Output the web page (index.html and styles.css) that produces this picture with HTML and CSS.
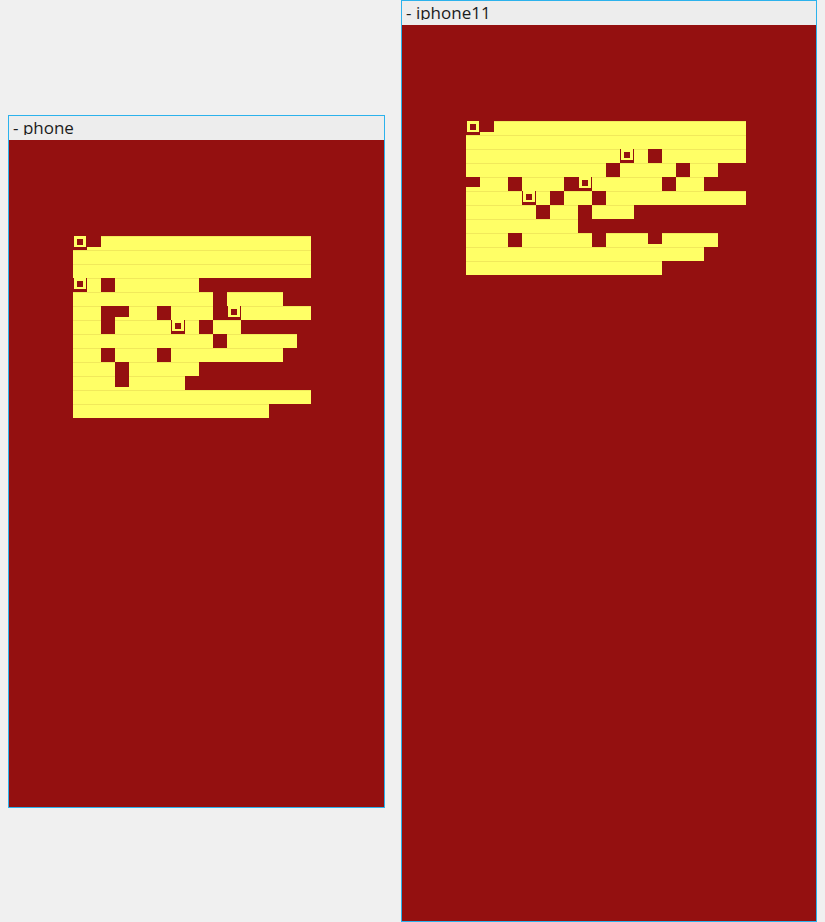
FILE: index.html
```html
<!DOCTYPE html>
<html>
<head>
<meta charset="utf-8">
<title>Devices</title>
<link rel="stylesheet" href="styles.css">
</head>
<body>
<div class="stage">
  <div class="device">
    <div class="bar"><div class="label">- phone</div></div>
    <div class="screen screen-phone">
      <div class="board board-17">
<i class="m"><b></b></i><i class="p"></i><i></i><i></i><i></i><i></i><i></i><i></i><i></i><i></i><i></i><i></i><i></i><i></i><i></i><i></i><i></i>
<i></i><i></i><i></i><i></i><i></i><i></i><i></i><i></i><i></i><i></i><i></i><i></i><i></i><i></i><i></i><i></i><i></i>
<i></i><i></i><i></i><i></i><i></i><i></i><i></i><i></i><i></i><i></i><i></i><i></i><i></i><i></i><i></i><i></i><i></i>
<i class="m"><b></b></i><i></i><i class="r"></i><i></i><i></i><i></i><i></i><i></i><i></i><i class="r"></i><i class="r"></i><i class="r"></i><i class="r"></i><i class="r"></i><i class="r"></i><i class="r"></i><i class="r"></i>
<i></i><i></i><i></i><i></i><i></i><i></i><i></i><i></i><i></i><i></i><i class="r"></i><i></i><i></i><i></i><i></i><i class="r"></i><i class="r"></i>
<i></i><i></i><i class="r"></i><i class="p"></i><i></i><i></i><i class="r"></i><i></i><i></i><i></i><i class="r"></i><i class="m"><b></b></i><i></i><i></i><i></i><i></i><i></i>
<i></i><i></i><i class="r"></i><i></i><i></i><i></i><i></i><i class="m"><b></b></i><i></i><i class="r"></i><i></i><i></i><i class="r"></i><i class="r"></i><i class="r"></i><i class="r"></i><i class="r"></i>
<i></i><i></i><i></i><i></i><i></i><i></i><i></i><i></i><i></i><i></i><i class="r"></i><i></i><i></i><i></i><i></i><i></i><i class="r"></i>
<i></i><i></i><i class="r"></i><i></i><i></i><i></i><i class="r"></i><i></i><i></i><i></i><i></i><i></i><i></i><i></i><i></i><i class="r"></i><i class="r"></i>
<i></i><i></i><i></i><i class="r"></i><i></i><i></i><i></i><i></i><i></i><i class="r"></i><i class="r"></i><i class="r"></i><i class="r"></i><i class="r"></i><i class="r"></i><i class="r"></i><i class="r"></i>
<i></i><i></i><i></i><i class="p"></i><i></i><i></i><i></i><i></i><i class="r"></i><i class="r"></i><i class="r"></i><i class="r"></i><i class="r"></i><i class="r"></i><i class="r"></i><i class="r"></i><i class="r"></i>
<i></i><i></i><i></i><i></i><i></i><i></i><i></i><i></i><i></i><i></i><i></i><i></i><i></i><i></i><i></i><i></i><i></i>
<i></i><i></i><i></i><i></i><i></i><i></i><i></i><i></i><i></i><i></i><i></i><i></i><i></i><i></i><i class="r"></i><i class="r"></i><i class="r"></i>
      </div>
    </div>
  </div>
  <div class="device">
    <div class="bar"><div class="label">- iphone11</div></div>
    <div class="screen screen-iphone11">
      <div class="board board-20">
<i class="m"><b></b></i><i class="p"></i><i></i><i></i><i></i><i></i><i></i><i></i><i></i><i></i><i></i><i></i><i></i><i></i><i></i><i></i><i></i><i></i><i></i><i></i>
<i></i><i></i><i></i><i></i><i></i><i></i><i></i><i></i><i></i><i></i><i></i><i></i><i></i><i></i><i></i><i></i><i></i><i></i><i></i><i></i>
<i></i><i></i><i></i><i></i><i></i><i></i><i></i><i></i><i></i><i></i><i></i><i class="m"><b></b></i><i></i><i class="r"></i><i></i><i></i><i></i><i></i><i></i><i></i>
<i></i><i></i><i></i><i></i><i></i><i></i><i></i><i></i><i></i><i></i><i class="r"></i><i></i><i></i><i></i><i></i><i class="r"></i><i></i><i></i><i class="r"></i><i class="r"></i>
<i class="p q"></i><i></i><i></i><i class="r"></i><i></i><i></i><i></i><i class="r"></i><i class="m"><b></b></i><i></i><i></i><i></i><i></i><i></i><i class="r"></i><i></i><i></i><i class="r"></i><i class="r"></i><i class="r"></i>
<i></i><i></i><i></i><i></i><i class="m"><b></b></i><i></i><i class="r"></i><i></i><i></i><i class="r"></i><i></i><i></i><i></i><i></i><i></i><i></i><i></i><i></i><i></i><i></i>
<i></i><i></i><i></i><i></i><i></i><i class="r"></i><i></i><i></i><i class="r"></i><i></i><i></i><i></i><i class="r"></i><i class="r"></i><i class="r"></i><i class="r"></i><i class="r"></i><i class="r"></i><i class="r"></i><i class="r"></i>
<i></i><i></i><i></i><i></i><i></i><i></i><i></i><i></i><i class="r"></i><i class="r"></i><i class="r"></i><i class="r"></i><i class="r"></i><i class="r"></i><i class="r"></i><i class="r"></i><i class="r"></i><i class="r"></i><i class="r"></i><i class="r"></i>
<i></i><i></i><i></i><i class="r"></i><i></i><i></i><i></i><i></i><i></i><i class="r"></i><i></i><i></i><i></i><i class="p"></i><i></i><i></i><i></i><i></i><i class="r"></i><i class="r"></i>
<i></i><i></i><i></i><i></i><i></i><i></i><i></i><i></i><i></i><i></i><i></i><i></i><i></i><i></i><i></i><i></i><i></i><i class="r"></i><i class="r"></i><i class="r"></i>
<i></i><i></i><i></i><i></i><i></i><i></i><i></i><i></i><i></i><i></i><i></i><i></i><i></i><i></i><i class="r"></i><i class="r"></i><i class="r"></i><i class="r"></i><i class="r"></i><i class="r"></i>
      </div>
    </div>
  </div>
</div>
</body>
</html>
```

FILE: styles.css
```css
* {
  box-sizing: border-box;
}

body {
  margin: 0;
  background: #f0f0f0;
  font-family: "Open Sans", "Noto Sans", sans-serif;
}

.stage {
  display: flex;
  align-items: center;
  gap: 16px;
  padding-left: 8px;
  height: 922px;
}

.device {
  border: 1px solid #2cb2ec;
  background: #ededed;
}

.bar {
  height: 24px;
  padding-left: 4px;
}

.label {
  height: 19px;
  overflow: hidden;
  font-size: 17px;
  line-height: 23px;
  color: #1c1c1c;
  white-space: nowrap;
}

.screen {
  background: #941010;
  padding: 96px 0 0 64px;
}

.screen-phone {
  width: 375px;
  height: 667px;
}

.screen-iphone11 {
  width: 414px;
  height: 896px;
}

.board {
  display: grid;
  grid-auto-rows: 14px;
}

.board-17 {
  grid-template-columns: repeat(17, 14px);
}

.board-20 {
  grid-template-columns: repeat(20, 14px);
}

.board i {
  display: block;
  background: #ffff66;
  box-shadow: inset 0 1px 0 #f1e95b;
}

.board i.r {
  background: #941010;
  box-shadow: none;
}

.board i.p {
  background: linear-gradient(#941010 11px, #ffff66 11px);
  box-shadow: none;
}

.board i.q {
  background: linear-gradient(#941010 10px, #ffff66 10px);
}

.board i.m {
  background: #941010;
  box-shadow: none;
  padding: 0 1px 3px 1px;
}

.board i.m b {
  display: block;
  width: 12px;
  height: 11px;
  border: 3px solid #ffff66;
  border-bottom-width: 2px;
}
```
